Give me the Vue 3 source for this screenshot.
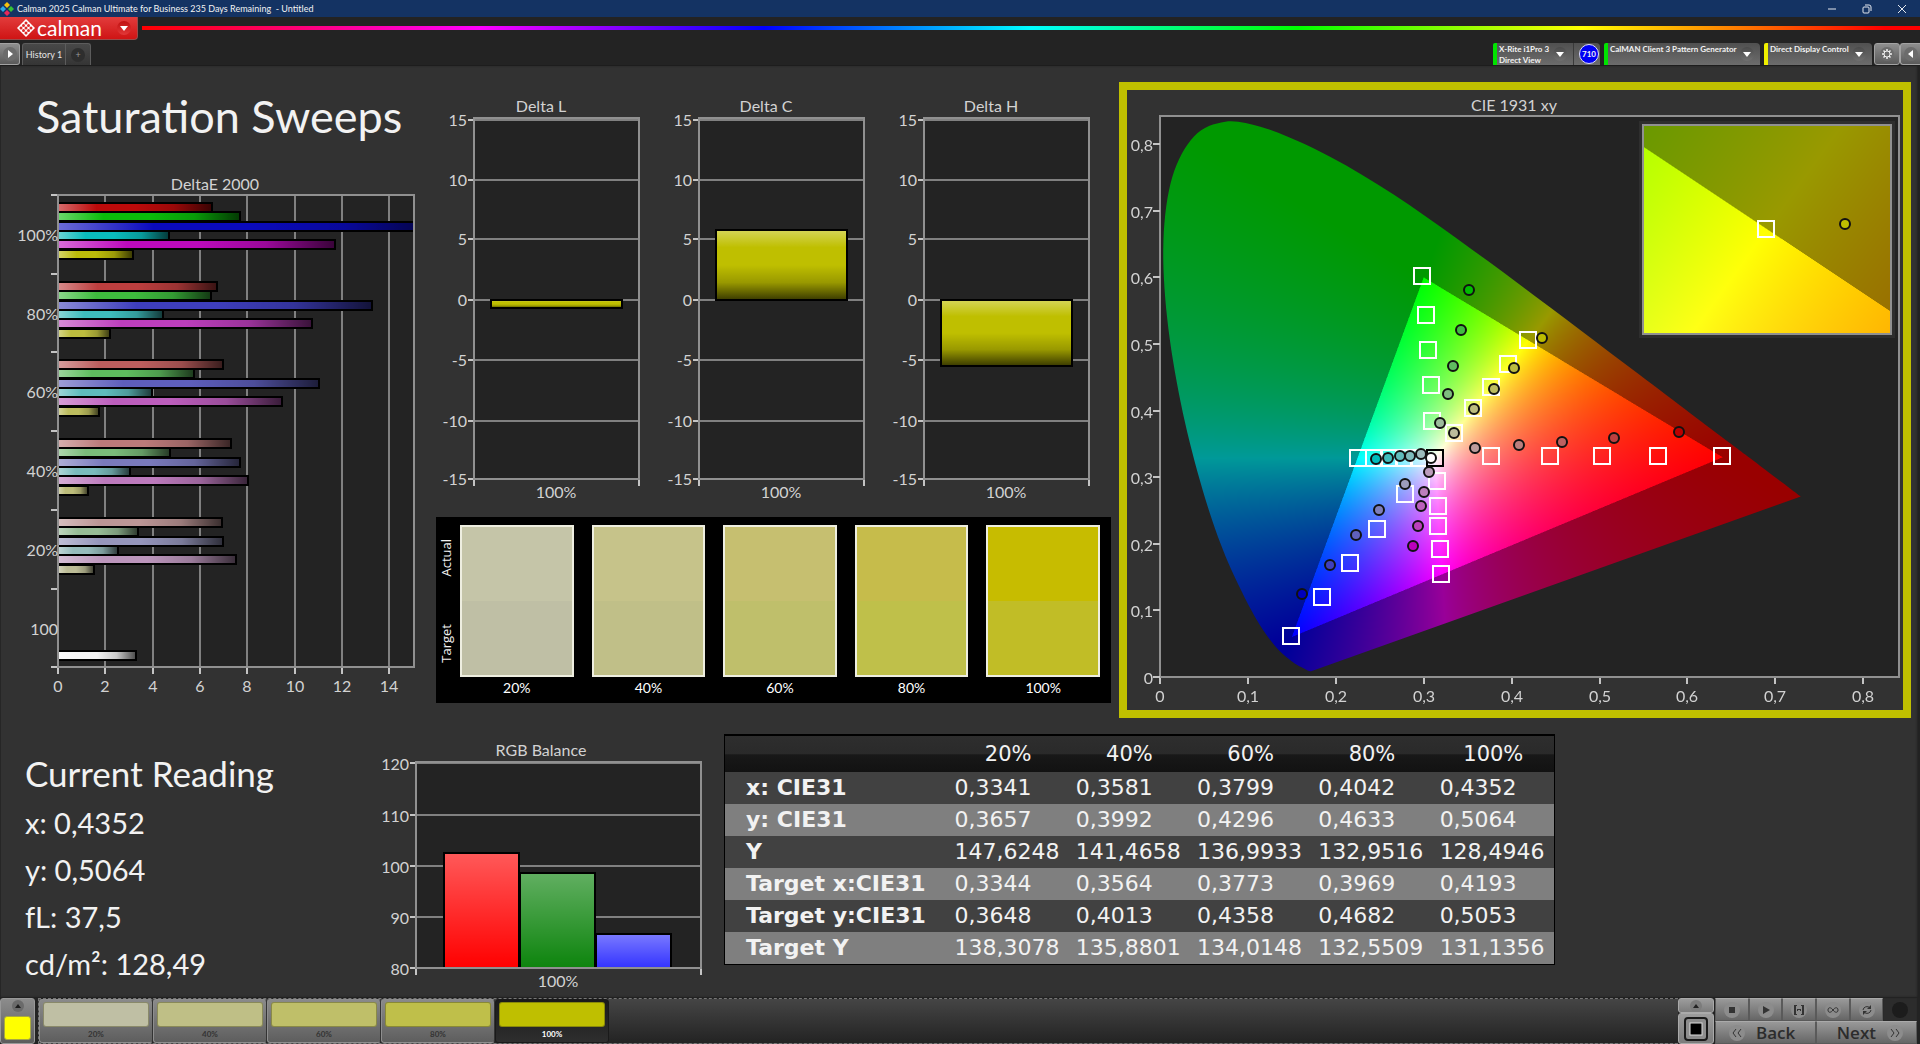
<script setup>
import { onMounted, ref } from 'vue'

/* ---------- DeltaE 2000 ---------- */
const groups = [
  { label: '100%', low: 10, ends: [212, 240, 440, 169, 335, 133] },
  { label: '80%', low: 62, ends: [217, 211, 372, 163, 312, 110] },
  { label: '60%', low: 94, ends: [223, 194, 319, 152, 282, 99] },
  { label: '40%', low: 122, ends: [231, 170, 240, 130, 248, 88] },
  { label: '20%', low: 150, ends: [222, 138, 223, 118, 236, 94] },
]
const hues = [
  [1, 0, 0],
  [0, 1, 0],
  [0, 0, 1],
  [0, 1, 1],
  [1, 0, 1],
  [1, 1, 0],
]
const tint = (hue, low) => `rgb(${hue.map((c) => (c ? 188 : low)).join(',')})`
const rowTop = (i) => Math.round(35 + i * 78.7)
const deBars = groups.flatMap((g, i) =>
  hues.map((h, k) => ({
    y: Math.round(rowTop(i) + 8 + k * 9.33),
    w: g.ends[k] - 58,
    fill: tint(h, g.low),
  })),
)
deBars.push({ y: 491, w: 78, fill: '#f4f4f4' })
const deLabels = [...groups.map((g) => g.label), '100']
const deTicks = [0, 2, 4, 6, 8, 10, 12, 14].map((v) => ({ v, x: Math.round(58 + v * 23.67) }))

/* ---------- Delta L / C / H ---------- */
const deltas = [
  { name: 'Delta L', top: 210, height: 8 },
  { name: 'Delta C', top: 140, height: 70 },
  { name: 'Delta H', top: 210, height: 66 },
]
const deltaTicks = [
  [15, 30],
  [10, 90],
  [5, 149],
  [0, 210],
  [-5, 270],
  [-10, 331],
  [-15, 389],
]

/* ---------- swatches and levels ---------- */
const levels = [
  { label: '20%', actual: '#c5c5a8', target: '#bfbfa5', key: '#bfbfa4' },
  { label: '40%', actual: '#c6c38a', target: '#c0bf88', key: '#bfbf86' },
  { label: '60%', actual: '#c6bf70', target: '#bfbf6b', key: '#bfbf69' },
  { label: '80%', actual: '#c6bc4b', target: '#bfc04a', key: '#bfbf4a' },
  { label: '100%', actual: '#c7bc00', target: '#c1bd26', key: '#bfbf00', active: true },
]

/* ---------- readings ---------- */
const readings = ['x: 0,4352', 'y: 0,5064', 'fL: 37,5', 'cd/m²: 128,49']
const rgbTicks = [
  [120, 33],
  [110, 85],
  [100, 136],
  [90, 187],
  [80, 238],
]
const rgbBars = [
  { x: 71, top: 123, fill: '#ff0000' },
  { x: 147, top: 143, fill: '#0d840d' },
  { x: 223, top: 204, fill: '#3333ff' },
]
const rows = [
  ['x: CIE31', '0,3341', '0,3581', '0,3799', '0,4042', '0,4352'],
  ['y: CIE31', '0,3657', '0,3992', '0,4296', '0,4633', '0,5064'],
  ['Y', '147,6248', '141,4658', '136,9933', '132,9516', '128,4946'],
  ['Target x:CIE31', '0,3344', '0,3564', '0,3773', '0,3969', '0,4193'],
  ['Target y:CIE31', '0,3648', '0,4013', '0,4358', '0,4682', '0,5053'],
  ['Target Y', '138,3078', '135,8801', '134,0148', '132,5509', '131,1356'],
]

/* ---------- CIE 1931 ---------- */
const targets = [
  [302, 196], [306, 235], [308, 270], [311, 305], [312, 341],
  [408, 260], [388, 284], [371, 307], [353, 328], [334, 353],
  [602, 376], [538, 376], [482, 376], [430, 376], [371, 376],
  [238, 378], [254, 378], [269, 378], [284, 378], [299, 378],
  [317, 401], [318, 426], [318, 446], [320, 469], [321, 494],
  [285, 414], [257, 449], [230, 483], [202, 517], [171, 556],
]
const measured = [
  { hue: [0, 1, 0], pts: [[349, 210], [341, 250], [333, 286], [328, 314], [320, 343]] },
  { hue: [1, 1, 0], pts: [[422, 258], [394, 288], [374, 309], [354, 329], [334, 353]] },
  { hue: [1, 0, 0], pts: [[559, 352], [494, 358], [442, 362], [399, 365], [355, 368]] },
  { hue: [0, 1, 1], pts: [[256, 379], [268, 378], [280, 376], [290, 376], [301, 374]] },
  { hue: [1, 0, 1], pts: [[293, 466], [298, 446], [301, 426], [304, 412], [309, 392]] },
  { hue: [0, 0, 1], pts: [[182, 514], [210, 485], [236, 455], [259, 430], [285, 404]] },
]
const lows = [0, 64, 96, 126, 156]
const dots = measured.flatMap((m) => m.pts.map((p, i) => ({ x: p[0], y: p[1], fill: tint(m.hue, lows[i]) })))
const cieX = [0, 1, 2, 3, 4, 5, 6, 7, 8].map((n) => ({ t: n ? `0,${n}` : '0', x: Math.round(40 + n * 87.9) }))
const cieY = [0, 1, 2, 3, 4, 5, 6, 7, 8].map((n) => ({ t: n ? `0,${n}` : '0', y: Math.round(597 - n * 66.6) }))

const locus = [
  [0.172, 0.0085], [0.1689, 0.0095], [0.1644, 0.0125], [0.1566, 0.0177], [0.151, 0.0227], [0.144, 0.0297],
  [0.1355, 0.0399], [0.1241, 0.0578], [0.1096, 0.0868], [0.0913, 0.1327], [0.0687, 0.2007], [0.0454, 0.295],
  [0.0235, 0.4127], [0.0082, 0.5384], [0.0039, 0.6548], [0.0139, 0.7502], [0.0389, 0.812], [0.0743, 0.8338],
  [0.1142, 0.8262], [0.1547, 0.8059], [0.1929, 0.7816], [0.2296, 0.7543], [0.2658, 0.7243], [0.3016, 0.6923],
  [0.3373, 0.6589], [0.3731, 0.6245], [0.4087, 0.5896], [0.4441, 0.5547], [0.4788, 0.5202], [0.5125, 0.4866],
  [0.5448, 0.4544], [0.5752, 0.4242], [0.6029, 0.3965], [0.627, 0.3725], [0.6482, 0.3514], [0.6658, 0.334],
  [0.6915, 0.3083], [0.7079, 0.292], [0.719, 0.2809], [0.729, 0.271],
]

function colorAt(x, y) {
  const X = x / y
  const Z = (1 - x - y) / y
  const lin = [
    3.2406 * X - 1.5372 - 0.4986 * Z,
    -0.9689 * X + 1.8758 + 0.0415 * Z,
    0.0557 * X - 0.204 + 1.057 * Z,
  ]
  const dim = Math.min(...lin) < 0 ? 153 : 255
  const max = Math.max(...lin)
  return lin.map((c) => (dim * Math.max(c, 0)) / max)
}

function paintField(canvas, x0, yTop, perX, perY, outline) {
  const ss = 2
  const w = canvas.width * ss
  const h = canvas.height * ss
  const buffer = document.createElement('canvas')
  buffer.width = w
  buffer.height = h
  const bctx = buffer.getContext('2d')
  const img = bctx.createImageData(w, h)
  for (let j = 0; j < h; j++) {
    const y = Math.max(yTop - (j + 0.5) / ss / perY, 0.0005)
    for (let i = 0; i < w; i++) {
      const c = colorAt(x0 + (i + 0.5) / ss / perX, y)
      img.data.set([c[0], c[1], c[2], 255], (j * w + i) * 4)
    }
  }
  bctx.putImageData(img, 0, 0)
  const ctx = canvas.getContext('2d')
  if (outline) {
    const p = outline.map(([x, y]) => [(x - x0) * perX, (yTop - y) * perY])
    const at = (i) => p[Math.min(Math.max(i, 0), p.length - 1)]
    ctx.beginPath()
    ctx.moveTo(p[0][0], p[0][1])
    for (let i = 0; i < p.length - 1; i++) {
      const [a, b, c, d] = [at(i - 1), at(i), at(i + 1), at(i + 2)]
      ctx.bezierCurveTo(
        b[0] + (c[0] - a[0]) / 6, b[1] + (c[1] - a[1]) / 6,
        c[0] - (d[0] - b[0]) / 6, c[1] - (d[1] - b[1]) / 6,
        c[0], c[1],
      )
    }
    ctx.closePath()
    ctx.clip()
  }
  ctx.drawImage(buffer, 0, 0, canvas.width, canvas.height)
}

const fieldCanvas = ref(null)
const insetCanvas = ref(null)
onMounted(() => {
  paintField(fieldCanvas.value, 0, 561 / 666, 879, 666, locus)
  paintField(insetCanvas.value, 0.4193 - 0.025, 0.5053 + 0.025, 4960, 4160, null)
})
</script>

<template>
  <div class="app">
    <header class="titlebar">
      <svg class="appicon" viewBox="0 0 14 14" aria-hidden="true">
        <path d="M7 0l3 3-3 3-3-3z" fill="#f4c20d" />
        <path d="M3 4l3 3-3 3-3-3z" fill="#29a9e8" />
        <path d="M11 4l3 3-3 3-3-3z" fill="#35c235" />
        <path d="M7 8l3 3-3 3-3-3z" fill="#e8285a" />
      </svg>
      <span class="apptitle">Calman 2025 Calman Ultimate for Business 235 Days Remaining&nbsp; - Untitled</span>
      <div class="winbtns">
        <button aria-label="Minimize"><svg viewBox="0 0 10 10"><path d="M1 5h8" /></svg></button>
        <button aria-label="Restore">
          <svg viewBox="0 0 10 10"><rect x="1" y="3" width="6" height="6" rx="1" /><path d="M3 1h4q2 0 2 2v4" /></svg>
        </button>
        <button aria-label="Close"><svg viewBox="0 0 10 10"><path d="M1 1l8 8M9 1l-8 8" /></svg></button>
      </div>
    </header>

    <div class="brandrow">
      <button class="brand">
        <svg class="brandmark" viewBox="0 0 36 36" aria-hidden="true">
          <path d="M18 0l18 18-18 18-18-18z" fill="#fff" />
          <g fill="#dc2a2a">
            <circle cx="18" cy="8" r="3" /><circle cx="13" cy="13" r="3" /><circle cx="23" cy="13" r="3" />
            <circle cx="8" cy="18" r="3" /><circle cx="18" cy="18" r="3" /><circle cx="28" cy="18" r="3" />
            <circle cx="13" cy="23" r="3" /><circle cx="23" cy="23" r="3" /><circle cx="18" cy="28" r="3" />
          </g>
        </svg>
        <span class="brandname">calman</span>
        <span class="caret red"><svg viewBox="0 0 8 5"><path d="M0 0h8l-4 5z" /></svg></span>
      </button>
      <div class="rainbow"></div>
    </div>

    <nav class="tabrow">
      <button class="sidebtn left" aria-label="Show panel">
        <span class="round"><svg viewBox="0 0 8 8"><path d="M2 0l5 4-5 4z" /></svg></span>
      </button>
      <div class="tabs">
        <button class="tab">History 1</button>
        <button class="tab plus" aria-label="Add history"><span>+</span></button>
      </div>
      <div class="devices">
        <div class="device meter">
          <button class="devname">X-Rite i1Pro 3<br />Direct View</button>
          <span class="caret"><svg viewBox="0 0 8 5"><path d="M0 0h8l-4 5z" /></svg></span>
          <span class="badgecell"><span class="badge">710</span></span>
        </div>
        <div class="device source">
          <button class="devname">CalMAN Client 3 Pattern Generator</button>
          <span class="caret"><svg viewBox="0 0 8 5"><path d="M0 0h8l-4 5z" /></svg></span>
        </div>
        <div class="device display">
          <button class="devname">Direct Display Control</button>
          <span class="caret"><svg viewBox="0 0 8 5"><path d="M0 0h8l-4 5z" /></svg></span>
        </div>
        <button class="sidebtn gear" aria-label="Settings">
          <span class="round">
            <svg viewBox="0 0 24 24">
              <circle cx="12" cy="12" r="6" fill="none" stroke="#eee" stroke-width="2" />
              <path d="M12 2v4M12 18v4M2 12h4M18 12h4M5 5l3 3M16 16l3 3M19 5l-3 3M8 16l-3 3" stroke="#eee" stroke-width="3" />
            </svg>
          </span>
        </button>
        <button class="sidebtn right" aria-label="Hide panel">
          <span class="round"><svg viewBox="0 0 8 8"><path d="M6 0L1 4l5 4z" /></svg></span>
        </button>
      </div>
    </nav>

    <main class="board">
      <section class="upper">
        <div class="sweeps">
          <h1>Saturation Sweeps</h1>
          <svg class="chart" viewBox="0 0 436 560">
            <defs>
              <linearGradient id="glossH">
                <stop offset="0" stop-color="#fff" stop-opacity=".4" />
                <stop offset=".25" stop-color="#fff" stop-opacity="0" />
                <stop offset=".5" stop-color="#000" stop-opacity="0" />
                <stop offset=".75" stop-color="#000" stop-opacity=".18" />
                <stop offset="1" stop-color="#000" stop-opacity=".7" />
              </linearGradient>
              <linearGradient id="glossV" x2="0" y2="1">
                <stop offset="0" stop-color="#fff" stop-opacity=".35" />
                <stop offset=".25" stop-color="#fff" stop-opacity="0" />
                <stop offset=".5" stop-color="#000" stop-opacity="0" />
                <stop offset=".75" stop-color="#000" stop-opacity=".2" />
                <stop offset="1" stop-color="#000" stop-opacity=".7" />
              </linearGradient>
              <linearGradient id="fadeV" x2="0" y2="1">
                <stop offset="0" stop-color="#fff" stop-opacity=".35" />
                <stop offset="1" stop-color="#fff" stop-opacity="0" />
              </linearGradient>
              <clipPath id="deClip"><rect x="58" y="36" width="355" height="470" /></clipPath>
            </defs>
            <text class="mid" x="215" y="30">DeltaE 2000</text>
            <rect class="plot" x="58" y="35" width="356" height="472" />
            <path v-for="t in deTicks" :key="t.v" class="gridline" :d="`M${t.x} 35V507`" />
            <path v-for="t in deTicks" :key="'k' + t.v" class="tick" :d="`M${t.x} 507v7`" />
            <path v-for="i in 7" :key="'r' + i" class="tick" :d="`M51 ${rowTop(i - 1)}h7`" />
            <g clip-path="url(#deClip)">
              <g v-for="(b, i) in deBars" :key="i">
                <rect :x="56" :y="b.y" :width="b.w + 2" height="9" :fill="b.fill" />
                <rect :x="58" :y="b.y" :width="b.w" height="9" fill="url(#glossH)" />
                <rect :x="56" :y="b.y" :width="b.w + 2" height="9" fill="none" stroke="#000" stroke-width="2" />
              </g>
            </g>
            <rect class="frame" x="58" y="35" width="356" height="472" />
            <text v-for="(l, i) in deLabels" :key="i" class="end" x="58" :y="rowTop(i) + 46">{{ l }}</text>
            <text v-for="t in deTicks" :key="'t' + t.v" class="mid" :x="t.x" y="532">{{ t.v }}</text>
          </svg>
        </div>

        <div class="middle">
          <div class="deltas">
            <svg v-for="d in deltas" :key="d.name" class="chart" viewBox="0 0 225 427">
              <text class="mid" x="105" y="22">{{ d.name }}</text>
              <rect class="plot" x="38" y="28" width="165" height="361" />
              <g v-for="t in deltaTicks" :key="t[0]">
                <path class="gridline" :d="`M38 ${t[1]}h165`" />
                <path class="tick" :d="`M32 ${t[1]}h6`" />
                <text class="end" x="31" :y="t[1] + 6">{{ t[0] }}</text>
              </g>
              <rect class="frame" x="38" y="28" width="165" height="361" />
              <path class="tick" d="M38 390v6M203 390v6" />
              <rect x="55" :y="d.top" width="131" :height="d.height" fill="#bfbf00" />
              <rect x="55" :y="d.top" width="131" :height="d.height" fill="url(#glossV)" stroke="#000" stroke-width="2" />
              <text class="mid" x="120" y="408">100%</text>
            </svg>
          </div>
          <div class="swatches">
            <div class="sides"><span>Actual</span><span>Target</span></div>
            <figure v-for="s in levels" :key="s.label">
              <div class="pair">
                <i :style="{ background: s.actual }"></i>
                <i :style="{ background: s.target }"></i>
              </div>
              <figcaption>{{ s.label }}</figcaption>
            </figure>
          </div>
        </div>

        <div class="cie">
          <svg class="chart" viewBox="7 10 776 620">
            <text class="mid" x="394" y="31">CIE 1931 xy</text>
            <rect class="plot" x="40" y="36" width="739" height="561" />
            <foreignObject x="40" y="36" width="739" height="561">
              <canvas ref="fieldCanvas" class="field" width="739" height="561"></canvas>
            </foreignObject>
            <rect class="frame" x="40" y="36" width="739" height="561" />
            <g v-for="t in cieX" :key="'x' + t.t">
              <path class="tick" :d="`M${t.x} 598v6`" />
              <text class="mid" :x="t.x" y="622">{{ t.t }}</text>
            </g>
            <g v-for="t in cieY" :key="'y' + t.t">
              <path class="tick" :d="`M33 ${t.y}h7`" />
              <text class="end" x="33" :y="t.y + 7">{{ t.t }}</text>
            </g>
            <rect v-for="(p, i) in targets" :key="i" class="target" :x="p[0] - 8" :y="p[1] - 8" width="16" height="16" />
            <rect class="target white" x="307" y="370" width="16" height="16" />
            <circle v-for="(p, i) in dots" :key="'d' + i" class="dot" :cx="p.x" :cy="p.y" r="5" :fill="p.fill" />
            <circle class="dot" cx="311" cy="378" r="5" fill="#fff" />
            <rect x="519" y="41" width="256" height="217" fill="#2e2e2e" />
            <foreignObject x="523" y="45" width="248" height="209">
              <canvas ref="insetCanvas" class="field" width="248" height="209"></canvas>
            </foreignObject>
            <rect class="frame" x="523" y="45" width="248" height="209" />
            <rect class="target" x="638" y="141" width="16" height="16" />
            <circle class="dot" cx="725" cy="144" r="5" fill="#bfbf00" />
          </svg>
        </div>
      </section>

      <section class="lower">
        <div class="reading">
          <h2>Current Reading</h2>
          <p v-for="r in readings" :key="r">{{ r }}</p>
        </div>
        <svg class="chart rgb" viewBox="0 0 342 264">
          <text class="mid" x="168" y="26">RGB Balance</text>
          <rect class="plot" x="43" y="32" width="285" height="206" />
          <g v-for="t in rgbTicks" :key="t[0]">
            <path class="gridline" :d="`M43 ${t[1]}h285`" />
            <path class="tick" :d="`M37 ${t[1]}h6`" />
            <text class="end" x="36" :y="t[1] + 7">{{ t[0] }}</text>
          </g>
          <g v-for="b in rgbBars" :key="b.x">
            <rect :x="b.x" :y="b.top" width="75" :height="238 - b.top" :fill="b.fill" />
            <rect :x="b.x" :y="b.top" width="75" :height="238 - b.top" fill="url(#fadeV)" stroke="#000" stroke-width="2" />
          </g>
          <path class="gridline" d="M43 238h285" />
          <rect class="frame" x="43" y="32" width="285" height="206" />
          <path class="tick" d="M43 239v6M328 239v6" />
          <text class="mid" x="185" y="257">100%</text>
        </svg>
        <table class="data">
          <thead>
            <tr>
              <th></th>
              <th v-for="s in levels" :key="s.label" scope="col">{{ s.label }}</th>
            </tr>
          </thead>
          <tbody>
            <tr v-for="r in rows" :key="r[0]">
              <th scope="row">{{ r[0] }}</th>
              <td v-for="(v, i) in r.slice(1)" :key="i">{{ v }}</td>
            </tr>
          </tbody>
        </table>
      </section>
    </main>

    <footer class="dock">
      <button class="current" aria-label="Current patch">
        <svg viewBox="0 0 12 12"><circle cx="6" cy="6" r="6" fill="#6a6a6a" /><path d="M3 8l3-4 3 4z" fill="#1c1c1c" /></svg>
        <i></i>
      </button>
      <div class="strip">
        <button v-for="s in levels" :key="s.label" class="level" :class="{ active: s.active }">
          <i :style="{ background: s.key }"></i>
          <span>{{ s.label }}</span>
        </button>
      </div>
      <div class="stopcol">
        <button class="up" aria-label="Expand">
          <svg viewBox="0 0 12 12"><circle cx="6" cy="6" r="6" fill="#7c7c7c" /><path d="M3 8l3-4 3 4z" fill="#222" /></svg>
        </button>
        <button class="stop" aria-label="Stop">
          <svg viewBox="0 0 24 24"><rect x="1" y="1" width="22" height="22" rx="3" fill="#8d8d8d" stroke="#1a1a1a" stroke-width="2" /><rect x="6" y="6" width="12" height="12" fill="#000" stroke="#ddd" /></svg>
        </button>
      </div>
      <div class="transport">
        <div class="keys">
          <button aria-label="Stop reading"><svg viewBox="0 0 16 16"><circle cx="8" cy="8" r="8" /><path d="M5 5h6v6H5z" /></svg></button>
          <button aria-label="Play"><svg viewBox="0 0 16 16"><circle cx="8" cy="8" r="8" /><path d="M5 4l7 4-7 4z" /></svg></button>
          <button aria-label="Read series"><svg viewBox="0 0 16 16"><circle cx="8" cy="8" r="8" /><path d="M3 3h3v1H5v8h1v1H3zM13 3h-3v1h1v8h-1v1h3zM6 7h1v2H6zM9 7h1v2H9zM7 7h2v1H7z" /></svg></button>
          <button aria-label="Loop"><svg viewBox="0 0 16 16"><circle cx="8" cy="8" r="8" /><path class="line" d="M8 8C6 5 3 5 3 8s3 3 5 0 5-3 5 0-3 3-5 0z" /></svg></button>
          <button aria-label="Refresh"><svg viewBox="0 0 16 16"><circle cx="8" cy="8" r="8" /><path class="line" d="M4 8a4 4 0 0 1 7-2M12 8a4 4 0 0 1-7 2" /><path d="M12 3v4H8zM4 13V9h4z" /></svg></button>
          <button class="off" aria-label="Record"><svg viewBox="0 0 16 16"><circle cx="8" cy="8" r="8" /></svg></button>
        </div>
        <div class="pages">
          <button class="back"><svg viewBox="0 0 16 16"><circle cx="8" cy="8" r="8" /><path class="line" d="M7 4L4 8l3 4M12 4L9 8l3 4" /></svg>Back</button>
          <button class="next">Next<svg viewBox="0 0 16 16"><circle cx="8" cy="8" r="8" /><path class="line" d="M4 4l3 4-3 4M9 4l3 4-3 4" /></svg></button>
        </div>
      </div>
    </footer>
  </div>
</template>

<style>
body {
  margin: 0;
  background: #323232;
}
</style>

<style scoped>
.app {
  display: flex;
  flex-direction: column;
  min-height: 100vh;
  background: #323232;
  color: #f2f2f2;
  font-family: Lato, 'Open Sans', sans-serif;
}
.app * {
  box-sizing: border-box;
}
button {
  margin: 0;
  padding: 0;
  border: 0;
  background: none;
  color: inherit;
  font: inherit;
}
svg {
  display: block;
}

.titlebar {
  display: flex;
  align-items: center;
  height: 17px;
  padding: 0 4px 0 0;
  background: #143363;
}
.appicon {
  width: 14px;
  height: 14px;
  margin-right: 3px;
}
.apptitle {
  flex: 1;
  font-size: 9px;
  line-height: 16px;
  white-space: nowrap;
}
.winbtns {
  display: flex;
  gap: 25px;
  padding-right: 9px;
}
.winbtns svg {
  width: 10px;
  height: 10px;
  fill: none;
  stroke: #e4e8ef;
}

.brandrow {
  display: flex;
  align-items: flex-start;
  height: 26px;
  background: #232323;
}
.brand {
  display: flex;
  align-items: center;
  width: 138px;
  height: 23px;
  padding: 0 6px 0 17px;
  border: 1px solid #9a4a4a;
  border-top: 0;
  border-left: 0;
  border-radius: 0 0 4px 0;
  background: linear-gradient(#e23c3c, #cf1414);
  color: #fff;
}
.brandmark {
  width: 18px;
  height: 18px;
  margin-right: 2px;
}
.brandname {
  flex: 1;
  font-size: 21px;
  line-height: 20px;
  text-align: left;
}
.caret {
  display: flex;
  align-items: center;
  justify-content: center;
  width: 14px;
  height: 14px;
  border-radius: 50%;
  background: linear-gradient(#4a4a4a, #707070);
}
.caret.red {
  background: linear-gradient(#c01010, #e23838);
}
.caret svg {
  width: 8px;
  height: 5px;
  fill: #fff;
}
.rainbow {
  flex: 1;
  height: 4px;
  margin: 9px 0 0 4px;
  background: linear-gradient(90deg, #f00, #f0f 19%, #00f 35%, #0ff 50%, #0f0 65%, #ff0 81%, #f00 98%);
}

.tabrow {
  display: flex;
  align-items: flex-start;
  height: 23px;
  border-bottom: 1px solid #1d1d1d;
  background: #232323;
}
.sidebtn {
  display: flex;
  align-items: center;
  justify-content: center;
  width: 26px;
  height: 22px;
  border: 1px solid #a2a2a2;
  border-radius: 3px;
  background: linear-gradient(#8e8e8e, #5a5a5a);
}
.sidebtn.left {
  width: 20px;
  border-left: 0;
  border-radius: 0 3px 3px 0;
}
.sidebtn.right {
  width: 20px;
  border-right: 0;
  border-radius: 3px 0 0 3px;
}
.round {
  display: flex;
  align-items: center;
  justify-content: center;
  width: 14px;
  height: 14px;
  border-radius: 50%;
  background: #6c6c6c;
}
.round svg {
  width: 8px;
  height: 8px;
  fill: #fff;
}
.gear .round svg {
  width: 12px;
  height: 12px;
}
.tabs {
  display: flex;
  flex: 1;
  height: 22px;
  margin-left: 2px;
}
.tab {
  width: 44px;
  border: 1px solid #5c5c5c;
  border-bottom: 0;
  border-radius: 3px 0 0 0;
  background: linear-gradient(#484848, #353535);
  color: #e4e4e4;
  font-size: 9px;
  line-height: 22px;
}
.tab.plus {
  display: flex;
  align-items: center;
  justify-content: center;
  width: 25px;
  border-left: 0;
  border-radius: 0 3px 0 0;
  color: #9a9a9a;
}
.tab.plus span {
  width: 14px;
  height: 14px;
  border-radius: 50%;
  background: #2e2e2e;
  line-height: 13px;
}
.devices {
  display: flex;
  height: 22px;
}
.device {
  display: flex;
  align-items: center;
  margin-right: 4px;
  border-left: 4px solid #00e400;
  border-radius: 2px 4px 0 0;
  background: linear-gradient(#505050, #6c6c6c);
}
.meter {
  width: 107px;
}
.source {
  width: 156px;
}
.display {
  width: 108px;
  margin-right: 2px;
  border-left-color: #f0f000;
}
.device .caret {
  margin-right: 6px;
}
.devname {
  flex: 1;
  align-self: flex-start;
  padding: 1px 0 0 2px;
  font-size: 8px;
  font-weight: 700;
  line-height: 11px;
  text-align: left;
  white-space: nowrap;
}
.badgecell {
  display: flex;
  align-items: center;
  height: 22px;
  padding: 0 1px 0 5px;
  border-left: 1px solid #3a3a3a;
}
.badge {
  width: 20px;
  height: 20px;
  border: 1px solid #dcdcff;
  border-radius: 50%;
  background: #0000f5;
  font-size: 8px;
  font-weight: 700;
  line-height: 18px;
  text-align: center;
}

.board {
  flex: 1;
  box-shadow: inset -3px 0 2px #222, inset 1px 0 0 #262626;
}
.upper {
  display: grid;
  grid-template-columns: 436fr 682fr 802fr;
}
.chart {
  width: 100%;
  height: auto;
  overflow: visible;
}
.chart text {
  fill: #d2d2d2;
  font-size: 16px;
}
.chart .mid {
  text-anchor: middle;
}
.chart .end {
  text-anchor: end;
}
.plot {
  fill: #232323;
}
.frame {
  fill: none;
  stroke: #909090;
  stroke-width: 2px;
}
.gridline {
  fill: none;
  stroke: #808080;
  stroke-width: 2px;
}
.tick {
  fill: none;
  stroke: #c4c4c4;
  stroke-width: 2px;
}
.sweeps h1 {
  margin: 24px 0 17px 36px;
  font-size: 45px;
  font-weight: 400;
  line-height: 53px;
  white-space: nowrap;
}
.middle {
  padding: 24px 7px 0 0;
}
.deltas {
  display: grid;
  grid-template-columns: repeat(3, 1fr);
}
.swatches {
  display: flex;
  gap: 18px;
  padding: 8px 11px 8px 2px;
  background: #000;
}
.sides {
  display: flex;
  flex-direction: column;
  justify-content: space-between;
  width: 16px;
  height: 152px;
  margin-right: -12px;
  padding: 14px 0;
  font: 13px/16px 'Open Sans', sans-serif;
}
.sides span {
  writing-mode: vertical-rl;
  transform: rotate(180deg);
}
.swatches figure {
  flex: 1;
  margin: 0;
}
.pair {
  display: flex;
  flex-direction: column;
  height: 152px;
  border: 2px solid #eeeee0;
}
.pair i {
  flex: 1;
}
.swatches figcaption {
  padding-top: 4px;
  color: #fff;
  font-size: 14px;
  line-height: 14px;
  text-align: center;
}
.cie {
  align-self: start;
  margin: 16px 9px 0 1px;
  border: 8px solid #bfbf00;
}
.field {
  display: block;
  width: 100%;
  height: 100%;
}
.target {
  fill: none;
  stroke: #fff;
  stroke-width: 2px;
}
.target.white {
  stroke: #000;
}
.dot {
  stroke: #111;
  stroke-width: 2px;
}

.lower {
  display: grid;
  grid-template-columns: 373fr 342fr 840fr 365fr;
  align-items: start;
}
.reading {
  padding: 32px 0 0 25px;
}
.reading h2 {
  margin: 0 0 5px;
  font-size: 35px;
  font-weight: 400;
  line-height: 42px;
  white-space: nowrap;
}
.reading p {
  margin: 0;
  font-size: 29px;
  line-height: 47px;
}
.rgb {
  margin-top: 10px;
}
.data {
  justify-self: stretch;
  margin: 14px 0 0 9px;
  border: 1px solid #000;
  border-top-width: 2px;
  border-collapse: collapse;
  table-layout: fixed;
  font: 22px/32px 'DejaVu Sans', sans-serif;
}
.data th,
.data td {
  padding: 0 0 0 7px;
  text-align: left;
  white-space: nowrap;
}
.data thead th {
  height: 37px;
  padding: 0;
  font-size: 21px;
  font-weight: 400;
  text-align: center;
}
.data thead th:first-child {
  width: 223px;
}
.data thead {
  background: linear-gradient(#2e2e2e, #2a2a2a 52%, #181818 53%, #121212);
}
.data tbody th {
  padding-left: 21px;
}
.data tbody tr {
  background: #414141;
}
.data tbody tr:nth-child(even) {
  background: #7f7f7f;
}

.dock {
  display: flex;
  height: 47px;
  border-top: 1px solid #222;
  background: #232323;
}
.current {
  display: flex;
  flex-direction: column;
  align-items: center;
  width: 35px;
  padding: 1px 0 3px;
  border: 1px solid #999;
  border-radius: 3px;
  background: linear-gradient(#8c8c8c, #5c5c5c);
}
.current svg {
  width: 12px;
  height: 12px;
}
.current i {
  width: 27px;
  height: 24px;
  margin-top: 4px;
  border: 1px solid #a8a840;
  border-radius: 3px;
  background: #ff0;
}
.strip {
  display: flex;
  flex: 1;
  margin-left: 3px;
  border: 1px dashed #777;
  border-width: 1px 0 1px 1px;
  background: linear-gradient(#454545, #232323);
}
.level {
  display: flex;
  flex-direction: column;
  width: 114px;
  padding: 2px 3px 0;
  border: 1px solid #8e8e8e;
  border-right-color: #333;
  border-radius: 3px;
  background: linear-gradient(#8a8a8a, #5e5e5e);
  color: #333;
  font-size: 8px;
  font-weight: 700;
  line-height: 15px;
  text-align: center;
}
.level.active {
  border-color: #1a1a1a;
  background: linear-gradient(#1a1a1a, #2e2e2e);
  color: #fff;
}
.level i {
  height: 28px;
  border: 1px solid rgba(60, 60, 20, 0.4);
  border-radius: 3px;
}
.stopcol {
  display: flex;
  flex-direction: column;
  width: 36px;
}
.stopcol button {
  display: flex;
  align-items: center;
  justify-content: center;
  border: 1px solid #aaa;
  border-radius: 3px;
  background: linear-gradient(#9c9c9c, #7c7c7c);
}
.up {
  height: 15px;
}
.up svg {
  width: 12px;
  height: 12px;
}
.stop {
  flex: 1;
}
.stop svg {
  width: 24px;
  height: 24px;
}
.transport {
  width: 206px;
  padding: 0 3px 0 1px;
}
.keys,
.pages {
  display: flex;
  height: 23px;
}
.keys button,
.pages button {
  display: flex;
  flex: 1;
  align-items: center;
  justify-content: center;
  border: 1px solid #5a5a5a;
  border-top-color: #aaa;
  background: linear-gradient(#999, #666);
  color: #2c2c2c;
}
.keys svg,
.pages svg {
  width: 16px;
  height: 16px;
  fill: #333;
}
.keys circle,
.pages circle {
  fill: #8c8c8c;
}
.keys .line,
.pages .line {
  fill: none;
  stroke: #333;
  stroke-width: 1px;
}
.keys .off {
  border-color: #2a2a2a;
  background: #2c2c2c;
}
.keys .off circle {
  fill: #1c1c1c;
}
.pages button {
  gap: 11px;
  padding: 0 13px;
  font: 600 17px/20px 'Open Sans', sans-serif;
}
.pages .back {
  justify-content: flex-start;
}
.pages .next {
  justify-content: flex-end;
}
</style>
